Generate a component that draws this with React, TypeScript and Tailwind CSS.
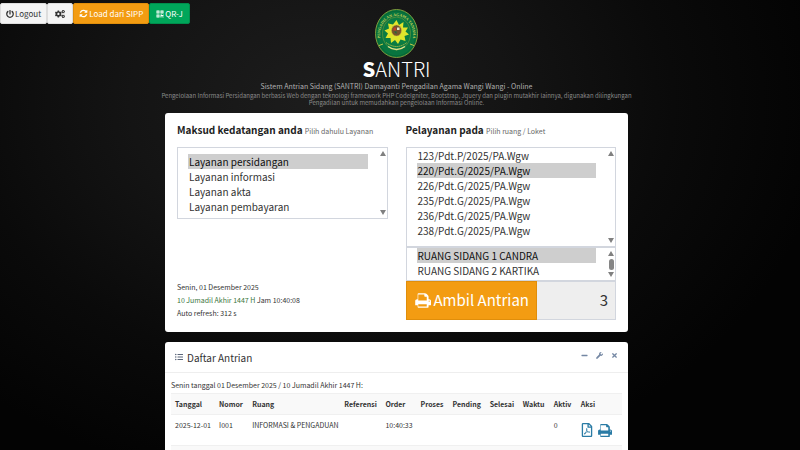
import type { ReactNode } from "react";
import {
  FaCogs,
  FaListUl,
  FaMinus,
  FaPowerOff,
  FaQrcode,
  FaRegFilePdf,
  FaTimes,
  FaWrench,
} from "react-icons/fa";

const COLUMNS = [
  { label: "Tanggal", width: "w-[44px]" },
  { label: "Nomor", width: "w-[33px]" },
  { label: "Ruang", width: "w-[92px]" },
  { label: "Referensi", width: "w-[41px]" },
  { label: "Order", width: "w-[35px]" },
  { label: "Proses", width: "w-[32px]" },
  { label: "Pending", width: "w-[37px]" },
  { label: "Selesai", width: "w-[33px]" },
  { label: "Waktu", width: "w-[31px]" },
  { label: "Aktiv", width: "w-[27px]" },
  { label: "Aksi", width: "w-[45px]" },
];

const ROW = ["2025-12-01", "I001", "INFORMASI & PENGADUAN", "", "10:40:33", "", "", "", "", "0"];

function PrintIcon({ className }: { className: string }) {
  return (
    <svg viewBox="0 0 1792 1792" fill="currentColor" className={className} aria-hidden="true">
      <path d="M448 1536h896v-256h-896v256zm0-640h896v-384h-160q-40 0-68-28t-28-68v-160h-640v640zm1216 64q0-26-19-45t-45-19-45 19-19 45 19 45 45 19 45-19 19-45zm128 0v416q0 13-9.500 22.500t-22.500 9.500h-224v160q0 40-28 68t-68 28h-960q-40 0-68-28t-28-68v-160h-224q-13 0-22.500-9.500t-9.500-22.500v-416q0-79 56.500-135.500t135.500-56.500h64v-544q0-40 28-68t68-28h672q40 0 88 20t76 48l152 152q28 28 48 76t20 88v256h64q79 0 135.500 56.500t56.500 135.500z" />
    </svg>
  );
}

function RefreshIcon({ className }: { className: string }) {
  return (
    <svg viewBox="0 0 1792 1792" fill="currentColor" className={className} aria-hidden="true">
      <path d="M1639 1056q0 5-1 7-64 268-268 434.500t-478 166.500q-146 0-282.500-55t-243.500-157l-129 129q-19 19-45 19t-45-19-19-45v-448q0-26 19-45t45-19h448q26 0 45 19t19 45-19 45l-137 137q71 66 161 102t187 36q134 0 250-65t186-179q11-17 53-117 8-23 30-23h192q13 0 22.500 9.500t9.500 22.500zm25-800v448q0 26-19 45t-45 19h-448q-26 0-45-19t-19-45 19-45l138-138q-148-137-349-137-134 0-250 65t-186 179q-11 17-53 117-8 23-30 23h-199q-13 0-22.500-9.500t-9.500-22.500v-7q65-268 270-434.500t480-166.500q146 0 284 55.500t245 156.500l130-129q19-19 45-19t45 19 19 45z" />
    </svg>
  );
}

function Emblem() {
  return (
    <svg viewBox="0 0 86 98" className="h-[49px] w-[43px]" role="img" aria-label="Pengadilan Agama">
      <defs>
        <path id="emblem-arc" d="M13 68 A33 38 0 1 1 73 68" />
      </defs>
      <ellipse cx="43" cy="49" rx="42" ry="48" fill="#08753f" stroke="#7f9a3c" strokeWidth="2" />
      <ellipse cx="43" cy="49" rx="39" ry="45" fill="none" stroke="#05562d" strokeWidth="1" />
      <ellipse cx="43" cy="49" rx="28" ry="33" fill="#0a7c42" stroke="#8f9f3b" strokeWidth="1" />
      <text fontSize="8" fontWeight="bold" fill="#c9cf55" fontFamily="Liberation Serif, serif">
        <textPath href="#emblem-arc" startOffset="50%" textAnchor="middle">
          PENGADILAN AGAMA TANISHA
        </textPath>
      </text>
      <path
        d="M43 22l5 10 9-6-1 11 10 0-5 8 7 6-9 3 2 10-10-3-5 9-6-8-8 6-1-10-10 0 5-9-7-6 9-4-2-10 10 2z"
        fill="#dfe52c"
      />
      <ellipse cx="43" cy="43" rx="10" ry="11" fill="#73542d" stroke="#d8b73c" strokeWidth="1" />
      <path d="M37 37h5v6h-5z" fill="#c33f2c" />
      <path d="M44 37h5v5h-5z" fill="#e9e2ca" />
      <path d="M38 45h5v5z" fill="#1c6a3c" />
      <path d="M22 67q21 16 42 0" fill="none" stroke="#a9b845" strokeWidth="2" strokeDasharray="3 1" />
      <path d="M26 75q17 12 34 0" fill="none" stroke="#dfe08a" strokeWidth="3" />
      <path d="M8 73l8-3M78 73l-8-3" stroke="#c9c94a" strokeWidth="2" />
    </svg>
  );
}

// Scroll arrows drawn on the right edge of each list box
function ListBox({
  label,
  options,
  selected,
  className,
  thumb,
}: {
  label: string;
  options: string[];
  selected: string;
  className: string;
  thumb?: boolean;
}) {
  return (
    <div className="relative">
      <select
        aria-label={label}
        size={options.length}
        defaultValue={selected}
        className={`block w-full overflow-hidden border border-[#d2d6de] bg-white pr-[19px] pl-[10px] text-[10px] text-[#333] [scrollbar-width:none] ${className}`}
      >
        {options.map((option) => (
          <option key={option} className="h-[15px] min-h-0 px-[1px] py-0 leading-[15px]">
            {option}
          </option>
        ))}
      </select>
      <div className="pointer-events-none absolute inset-y-0 right-[2px] flex flex-col items-center justify-between py-[4px] text-[#808080]">
        <svg viewBox="0 0 6 5" className="h-[5px] w-[6px]" fill="currentColor" aria-hidden="true">
          <path d="M3 0l3 5H0z" />
        </svg>
        {thumb && <span className="h-[11px] w-[5px] rounded-full bg-[#858585]" />}
        <svg viewBox="0 0 6 5" className="h-[5px] w-[6px]" fill="currentColor" aria-hidden="true">
          <path d="M3 5l3-5H0z" />
        </svg>
      </div>
    </div>
  );
}

function Heading({ title, hint }: { title: string; hint: string }) {
  return (
    <h2 className="mb-[9px] text-[10px] leading-[16px] font-bold whitespace-nowrap text-[#222]">
      {title} <small className="text-[7px] leading-none font-normal text-[#666]">{hint}</small>
    </h2>
  );
}

function ToolButton({ className, children, label }: { className: string; children: ReactNode; label?: string }) {
  return (
    <button
      type="button"
      aria-label={label}
      className={`flex h-[21px] items-center gap-[1px] rounded-[2px] border text-[8px] ${className}`}
    >
      {children}
    </button>
  );
}

export default function App() {
  return (
    <div className="min-h-screen bg-[#060606] bg-[radial-gradient(ellipse_at_40%_22%,#1d1d1d_0%,#141414_28%,#0a0a0a_52%,#030303_75%)] pr-[7px] font-['Noto_Sans_CJK_JP','Source_Sans_Pro',sans-serif] text-[#333]">
      <header className="grid grid-cols-[1fr_auto_1fr] items-start pt-[3px]">
        <nav className="flex">
          <ToolButton className="border-[#ddd] bg-[#f4f4f4] px-[5px] text-[#333]">
            <FaPowerOff className="size-[8px]" />
            Logout
          </ToolButton>
          <ToolButton className="border-[#ddd] bg-[#f4f4f4] px-[7px] text-[#333]" label="Pengaturan">
            <FaCogs className="size-[10px]" />
          </ToolButton>
          <ToolButton className="border-[#e08e0b] bg-[#f39c12] px-[5px] text-white">
            <RefreshIcon className="size-[9px]" />
            Load dari SIPP
          </ToolButton>
          <ToolButton className="border-[#008d4c] bg-[#00a65a] px-[6px] text-white">
            <FaQrcode className="size-[8px]" />
            QR-J
          </ToolButton>
        </nav>
        <div className="pt-[6px]">
          <Emblem />
        </div>
      </header>

      <main className="mx-auto w-full max-w-[463px]">
        <div className="text-center">
          <h1 className="text-[20px] leading-[22px] font-light text-white">
            <b className="font-black">S</b>ANTRI
          </h1>
          <p className="text-[7px] leading-[12px] text-[#b0b0b0]">
            Sistem Antrian Sidang (SANTRI) Damayanti Pengadilan Agama Wangi Wangi - Online
          </p>
          <p className="-mx-[10px] text-[6px] leading-[7px] text-[#8a8a8a]">
            Pengelolaan Informasi Persidangan berbasis Web dengan teknologi framework PHP CodeIgniter, Bootstrap, Jquery
            dan plugin mutakhir lainnya, digunakan dilingkungan Pengadilan untuk memudahkan pengelolaan Informasi
            Online.
          </p>
        </div>

        <section className="mt-[7px] grid grid-cols-2 gap-[18px] rounded-[3px] bg-white px-[12px] pt-[9px] pb-[12px]">
          <div className="flex flex-col">
            <Heading title="Maksud kedatangan anda" hint="Pilih dahulu Layanan" />
            <ListBox
              label="Maksud kedatangan anda"
              options={["Layanan persidangan", "Layanan informasi", "Layanan akta", "Layanan pembayaran"]}
              selected="Layanan persidangan"
              className="h-[72px] py-[6px]"
            />
            <div className="mt-auto text-[7px] leading-[13px]">
              <p>Senin, 01 Desember 2025</p>
              <p>
                <span className="text-[#3c763d]">10 Jumadil Akhir 1447 H</span> Jam 10:40:08
              </p>
              <p>Auto refresh: 312 s</p>
            </div>
          </div>

          <div>
            <Heading title="Pelayanan pada" hint="Pilih ruang / Loket" />
            <ListBox
              label="Perkara"
              options={[
                "123/Pdt.P/2025/PA.Wgw",
                "220/Pdt.G/2025/PA.Wgw",
                "226/Pdt.G/2025/PA.Wgw",
                "235/Pdt.G/2025/PA.Wgw",
                "236/Pdt.G/2025/PA.Wgw",
                "238/Pdt.G/2025/PA.Wgw",
              ]}
              selected="220/Pdt.G/2025/PA.Wgw"
              className="h-[100px]"
            />
            <ListBox
              label="Ruang sidang"
              options={["RUANG SIDANG 1 CANDRA", "RUANG SIDANG 2 KARTIKA"]}
              selected="RUANG SIDANG 1 CANDRA"
              className="h-[34px]"
              thumb
            />
            <div className="flex h-[39px]">
              <button
                type="button"
                className="flex shrink-0 items-center gap-[3px] border border-[#e08e0b] bg-[#f39c12] px-[7px] text-[15px] text-white"
              >
                <PrintIcon className="size-[17px]" />
                Ambil Antrian
              </button>
              <input
                type="text"
                aria-label="Nomor antrian"
                readOnly
                defaultValue="3"
                className="w-full min-w-0 border border-l-0 border-[#d2d6de] bg-[#eee] px-[7px] text-right text-[15px] text-[#333]"
              />
            </div>
          </div>
        </section>

        <section className="mt-[10px] rounded-t-[3px] bg-white">
          <div className="flex h-[31px] items-center justify-between border-b border-[#eee] px-[10px]">
            <h3 className="flex items-center gap-[4px] text-[10px]">
              <FaListUl className="size-[8px] text-[#5a6578]" />
              Daftar Antrian
            </h3>
            <div className="flex items-center gap-[8px] pb-[3px] text-[#7487a3]">
              <button type="button" aria-label="Ciutkan">
                <FaMinus className="size-[7px]" />
              </button>
              <button type="button" aria-label="Alat">
                <FaWrench className="size-[7px]" />
              </button>
              <button type="button" aria-label="Tutup">
                <FaTimes className="size-[7px]" />
              </button>
            </div>
          </div>
          <div className="px-[6px] pt-[5px]">
            <p className="text-[7px] leading-[14px]">Senin tanggal 01 Desember 2025 / 10 Jumadil Akhir 1447 H:</p>
            <table className="mt-[1px] w-full table-fixed text-left text-[7px] leading-[10px]">
              <thead>
                <tr className="h-[21px] border-t border-[#f0f0f0] bg-[#f9f9f9]">
                  {COLUMNS.map((column) => (
                    <th key={column.label} scope="col" className={`${column.width} pl-[4px] font-bold whitespace-nowrap`}>
                      {column.label}
                    </th>
                  ))}
                </tr>
              </thead>
              <tbody>
                <tr className="h-[31px] border-t border-[#f0f0f0]">
                  {ROW.map((cell, index) => (
                    <td key={COLUMNS[index].label} className="pt-[5px] pl-[4px] align-top whitespace-nowrap">
                      {cell}
                    </td>
                  ))}
                  <td className="pl-[4px]">
                    <div className="flex items-center gap-[4px] text-[#2a7ba5]">
                      <a href="#pdf" aria-label="Unduh PDF">
                        <FaRegFilePdf className="h-[14px] w-[12px]" />
                      </a>
                      <a href="#cetak" aria-label="Cetak">
                        <PrintIcon className="size-[15px]" />
                      </a>
                    </div>
                  </td>
                </tr>
                <tr className="h-[21px] border-t border-[#f0f0f0] bg-[#f9f9f9]">
                  <td colSpan={11} />
                </tr>
              </tbody>
            </table>
          </div>
        </section>
      </main>
    </div>
  );
}
